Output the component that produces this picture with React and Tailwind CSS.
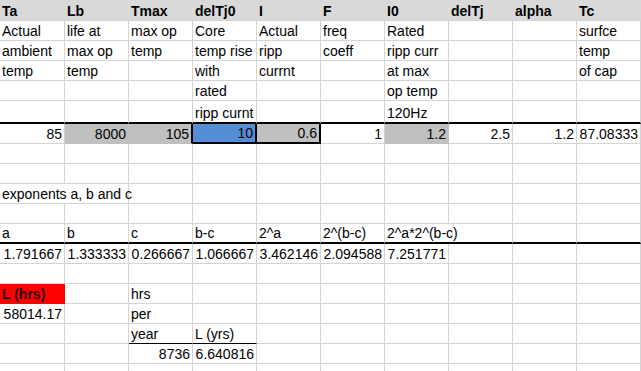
import { twMerge } from "tailwind-merge";

const widths = ["w-[65px]", "w-[64px]", "w-[64px]", "w-[64px]", "w-[64px]", "w-[64px]", "w-[64px]", "w-[64px]", "w-[64px]", "w-[64px]"];

// a cell is a string (left text), or { t, r (right align), cls }
function Cell({ col, cell }) {
  const c = typeof cell === "string" ? { t: cell } : cell || {};
  return (
    <div
      className={twMerge(
        "shrink-0 h-full flex items-end pb-[1px] px-[2px] whitespace-nowrap border-r border-b border-r-[#d4d4d4] border-b-[#d4d4d4]",
        widths[col],
        c.r ? "justify-end" : "justify-start",
        c.cls
      )}
    >
      <span className="leading-[16px]">{c.t}</span>
    </div>
  );
}

function Row({ h, cells = [], rowCls }) {
  return (
    <div className={`flex ${h}`}>
      {widths.map((_, i) => (
        <Cell key={i} col={i} cell={rowCls ? { ...(typeof cells[i] === "string" ? { t: cells[i] } : cells[i] || {}), cls: twMerge(rowCls, cells[i]?.cls) } : cells[i]} />
      ))}
    </div>
  );
}

const hdr = "bg-[#d9d9d9] font-bold border-r-[#d9d9d9]";
const grey = "bg-[#c0c0c0] border-r-[#c0c0c0] border-b-[#c0c0c0]";
const R = (t, cls) => ({ t, r: true, cls });

export default function App() {
  return (
    <div
      className="w-[641px] h-[371px] overflow-hidden bg-white text-[14px] text-black"
      style={{ fontFamily: '"Liberation Sans", Arial, sans-serif' }}
    >
      <Row h="h-[21px]" rowCls={hdr} cells={["Ta", "Lb", "Tmax", "delTj0", "I", "F", "I0", "delTj", "alpha", "Tc"]} />
      <Row h="h-[20px]" cells={["Actual", "life at", "max op", "Core", "Actual", "freq", "Rated", "", "", "surfce"]} />
      <Row h="h-[20px]" cells={["ambient", "max op", "temp", "temp rise", "ripp", "coeff", "ripp curr", "", "", "temp"]} />
      <Row h="h-[20px]" cells={["temp", "temp", "", "with", "currnt", "", "at max", "", "", "of cap"]} />
      <Row h="h-[20px]" cells={["", "", "", "rated", "", "", "op temp", "", "", ""]} />
      <Row h="h-[23px]" rowCls="border-b-2 border-b-black" cells={["", "", "", "ripp curnt", "", "", "120Hz", "", "", ""]} />
      <Row
        h="h-[20px]"
        cells={[
          R("85"),
          R("8000", grey),
          R("105", twMerge(grey, "border-r-2 border-r-black")),
          R("10", "bg-[#558ed5] border-r-2 border-r-black border-b-2 border-b-black"),
          R("0.6", "bg-[#c0c0c0] border-r-2 border-r-black border-b-2 border-b-black"),
          R("1"),
          R("1.2", grey),
          R("2.5"),
          R("1.2"),
          R("87.08333"),
        ]}
      />
      <Row h="h-[20px]" />
      <Row h="h-[20px]" />
      <Row h="h-[20px]" cells={[{ t: "exponents a, b and c", cls: "border-r-0 overflow-visible relative z-10" }]} />
      <Row h="h-[20px]" />
      <Row
        h="h-[20px]"
        rowCls="border-b-2 border-b-black"
        cells={["a", "b", "c", "b-c", "2^a", "2^(b-c)", { t: "2^a*2^(b-c)", cls: "border-r-0 relative z-10" }, "", "", ""]}
      />
      <Row
        h="h-[20px]"
        cells={[R("1.791667"), R("1.333333"), R("0.266667"), R("1.066667"), R("3.462146"), R("2.094588"), R("7.251771")]}
      />
      <Row h="h-[20px]" />
      <Row
        h="h-[20px]"
        cells={[{ t: "L (hrs)", cls: "bg-[#ff0000] border-r-[#ff0000] border-b-[#ff0000] font-bold text-[#2a0000]" }, "", "hrs"]}
      />
      <Row h="h-[20px]" cells={[R("58014.17"), "", "per"]} />
      <Row
        h="h-[20px]"
        cells={["", "", { t: "year", cls: "border-b-black" }, { t: "L (yrs)", cls: "border-b-black" }]}
      />
      <Row h="h-[20px]" cells={["", "", R("8736"), R("6.640816")]} />
      <Row h="h-[20px]" />
    </div>
  );
}
